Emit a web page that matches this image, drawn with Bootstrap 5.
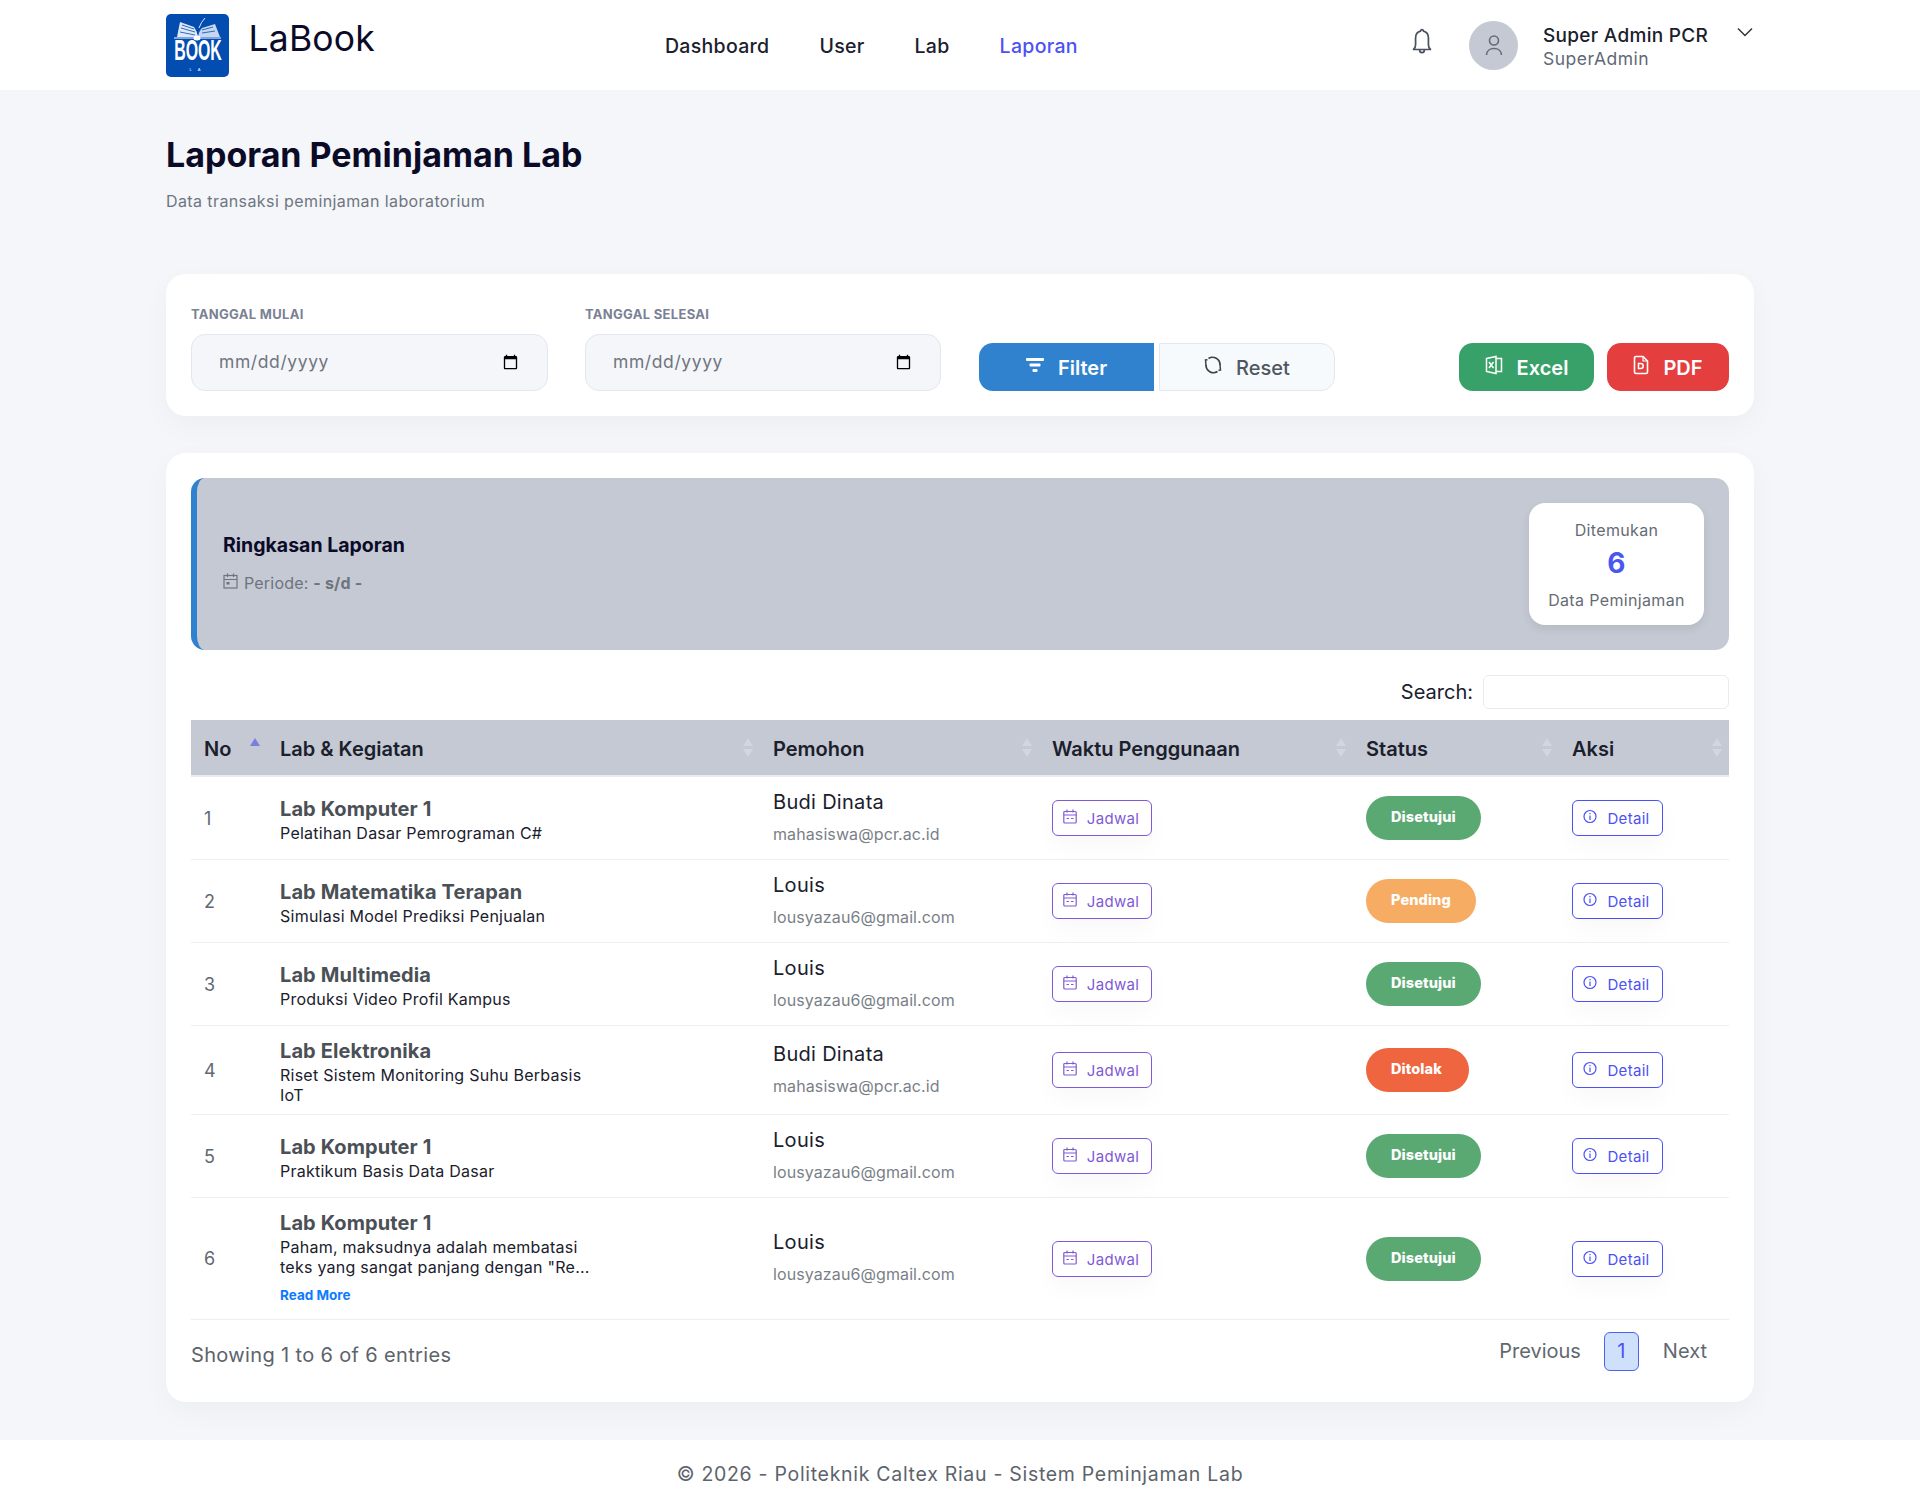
<!DOCTYPE html>
<html lang="id">
<head>
<meta charset="utf-8">
<title>Laporan Peminjaman Lab</title>
<link href="https://cdn.jsdelivr.net/npm/bootstrap@5.3.0/dist/css/bootstrap.min.css" rel="stylesheet">
<style>
html,body{height:1507px}
body{background:#f4f6fa;font-family:Inter,"Liberation Sans",sans-serif;color:#1a202c;font-size:16px}
.wrap-x{width:1588px;margin:0 auto}
.topbar{background:#fff;height:90px;padding:0}
.topbar .wrap-x{display:flex;align-items:center;height:90px}
.logo-box{width:63px;height:63px;display:block}
.brand-txt{font-size:35.500px;color:#0b0b28;margin-left:19.500px;line-height:1;margin-top:-12px;letter-spacing:.2px;padding:0}
.main-nav{margin-left:274px;gap:50px;margin-top:1px}
.main-nav .nav-link{padding:0;color:#1a202c;font-size:19.500px;font-weight:500;line-height:26px;letter-spacing:.3px}
.main-nav .nav-link.active{color:#4c51f5}
.ava{width:49px;height:49px;border-radius:50%;background:#c5c9d3}
.bell-ic{margin-right:34px;margin-top:-6px}
.who{margin-left:25px;width:211px;position:relative;padding-top:5px}
.who-name{font-size:19px;font-weight:500;line-height:23px;color:#1a202c;letter-spacing:.3px}
.who-role{font-size:17.500px;line-height:24px;color:#5f6875;letter-spacing:.5px}
.page-h1{font-size:34px;font-weight:700;color:#0b0b28;line-height:41px;margin:44px 0 0}
.page-sub{font-size:16px;color:#6f7580;line-height:22px;margin:15px 0 0;letter-spacing:.4px}
.soft-card{background:#fff;border:0;border-radius:20px;box-shadow:0 10px 30px rgba(0,0,0,.035)}
.filter-card{margin-top:62px;height:142px;padding:30px 25px 25px;gap:37px}
.f-field{width:357px}
.f-field+.f-field{width:356px}
.f-label{font-size:13px;font-weight:700;color:#7a8194;line-height:20px;margin:0 0 10px;text-transform:uppercase;display:block;letter-spacing:.3px}
.f-input{height:57px;background:#f4f6fa;border:1px solid #e2e8f0;border-radius:14px;padding:0 26px 0 27px;font-size:17.500px;color:#6f7580;letter-spacing:.6px}
.f-input:focus{background:#f4f6fa}
.act-btn{height:48px;display:flex;align-items:center;justify-content:center;gap:14px;font-size:20px;font-weight:600;border:0;padding:2px 0 0;color:#fff}
.act-btn svg{margin-top:-6px}
.b-filter{width:175px;background:#3182ce;border-radius:14px 0 0 14px}
.b-reset{width:176px;background:#f7fafc;border:1px solid #e2e8f0;border-radius:0 14px 14px 0;color:#4f5661;font-weight:500;margin-left:5px}
.b-excel{width:135px;background:#38a169;border-radius:14px}
.b-pdf{width:122px;background:#e53e3e;border-radius:14px;margin-left:13px}
.act-btn:hover,.act-btn:active{color:#fff}
.b-reset:hover{color:#4f5661}
.table-card{margin-top:37px;height:949px;padding:25px}
.sum-box{height:172px;background:#c5c9d3;border-left:6px solid #3182ce;border-radius:14px;padding:25px 25px 25px 26px}
.sum-title{font-size:19.500px;font-weight:700;color:#0b0b28;line-height:26px;margin:-2px 0 0}
.sum-per{font-size:16px;color:#6e747e;line-height:22px;margin:14px 0 0;display:flex;align-items:center;gap:6px;letter-spacing:.2px}
.sum-per svg{margin-top:-4px}
.sum-per b{color:#6e747e;font-weight:700}
.found{width:175px;height:122px;background:#fff;border-radius:16px;box-shadow:0 4px 10px rgba(0,0,0,.08);text-align:center;padding-top:16px;color:#666c75;font-size:16px;line-height:22px;letter-spacing:.35px}
.found-num{font-size:28px;font-weight:700;color:#4a56f0;line-height:34px;margin:5px 0 9px}
.search-row{margin-top:25px;height:34px;gap:10px}
.search-row label{font-size:20px;color:#1a202c;margin:0}
.search-in{width:246px;height:34px;border:1px solid #e8ebf0;border-radius:6px;padding:0 8px}
.data-tbl{margin:11px 0 0;table-layout:fixed;width:1538px;--bs-table-bg:transparent}
.data-tbl th{background:#c5c9d3;height:56px;padding:2px 13px 0;font-size:20px;font-weight:600;color:#1a202c;vertical-align:middle;border-bottom:2px solid #e8eaee;position:relative}
.data-tbl th::before,.data-tbl th::after{content:"";position:absolute;right:7px;border-left:5px solid transparent;border-right:5px solid transparent}
.data-tbl th::before{top:18px;border-bottom:8px solid #d3d6de}
.data-tbl th::after{top:29px;border-top:8px solid #d3d6de}
.data-tbl th.sorted::before{border-bottom-color:#7a7ee0;top:18px;right:7px}
.data-tbl th.sorted::after{display:none}
.data-tbl td{padding:11.500px 13px;vertical-align:middle;border-bottom:1px solid #eceef1;background:transparent}
.data-tbl td.lab-cell{padding-top:13.500px;padding-bottom:9.500px}
.data-tbl .num{font-size:18px;color:#62686f}
.lab-name{font-size:20px;font-weight:700;color:#4a5056;line-height:23px;margin-bottom:2px;letter-spacing:.1px}
.lab-sub{font-size:16px;line-height:20px;color:#1a202c;max-width:320px;letter-spacing:.25px}
.read-more{display:block;font-size:13.500px;font-weight:700;color:#0d7bfd;line-height:36px;height:33px;text-decoration:none}
.p-name{font-size:20px;line-height:26px;color:#1a202c;letter-spacing:.3px}
.p-mail{font-size:16px;line-height:28px;color:#7a7f87;margin-top:5px;letter-spacing:.1px}
.row-btn{display:inline-flex;align-items:center;gap:10px;height:36px;background:#fff;border-radius:6px;font-size:15px;padding:0;justify-content:center;box-shadow:0 10px 24px rgba(0,0,0,.03);letter-spacing:.3px}
.row-btn span{padding-top:3px}
.row-btn svg{margin-top:-3px;margin-left:-2px}
.b-jadwal{width:100px;border:1.5px solid #805ad5;color:#805ad5}
.b-detail{width:91px;border:1.5px solid #4c51f5;color:#4c51f5}
.st-pill{height:44px;display:inline-flex;align-items:center;padding:0 25px 2px;border-radius:22px;font-size:14.500px;font-weight:800;color:#fff;letter-spacing:.1px}
.st-ok{background:#5aa973;min-width:115px}
.st-wait{background:#f6ad63;min-width:109px}
.st-no{background:#ef6540;min-width:103px}
.tbl-foot{height:62px;margin-top:0}
.tbl-info{font-size:20px;color:#5c636b;margin-top:7px;letter-spacing:.35px}
.pg-list{gap:0;margin:0;margin-top:1px}
.pg-list .page-link{border:0;background:transparent;color:#62686f;font-size:20px;padding:0;line-height:39px}
.pg-list .page-item:first-child .page-link{margin-right:24px}
.pg-list .page-item:last-child .page-link{margin-left:24px;margin-right:22px}
.pg-list .page-item.active .page-link{width:35px;height:39px;text-align:center;background:#cfe0fb;border:1px solid #4c62f0;border-radius:6px;color:#4c51f5;line-height:37px}
.foot-bar{background:#fff;height:67px;margin-top:38px;display:flex;align-items:center;justify-content:center;font-size:19.500px;color:#5c636b;padding-top:2px;letter-spacing:.7px}
</style>
</head>
<body>
<nav class="topbar navbar">
  <div class="wrap-x">
    <svg class="logo-box" viewBox="0 0 63 63" role="img" aria-label="LaBook">
      <rect width="63" height="63" rx="5" fill="#034db0"/>
      <path d="M11 23 L14 8 L28 13 Q31 17 32 23 Z" fill="#dfe8f8"/>
      <path d="M54 23 L49 10 L36 14 Q33 17 32 23 Z" fill="#c7d6f2"/>
      <path d="M16 11 L28 15 M15 14 L29 18 M14 18 L29 21 M47 13 L36 16 M49 17 L36 19" stroke="#034db0" stroke-width=".8"/>
      <path d="M33 14 Q35 8 39 4" stroke="#dfe8f8" stroke-width="1" fill="none"/>
      <ellipse cx="31" cy="24" rx="3.500" ry="2.500" fill="#fff"/>
      <path d="M8 24 H55" stroke="#fff" stroke-width="1"/>
      <text transform="translate(32 46) scale(.53 1)" text-anchor="middle" fill="#fff" font-family="'Liberation Sans',sans-serif" font-weight="700" font-size="30">BOOK</text>
      <text x="32" y="57" text-anchor="middle" fill="#fff" font-family="'Liberation Sans',sans-serif" font-size="4" letter-spacing="6">LA</text>
    </svg>
    <a class="navbar-brand brand-txt" href="#">LaBook</a>
    <ul class="nav main-nav">
      <li class="nav-item"><a class="nav-link" href="#">Dashboard</a></li>
      <li class="nav-item"><a class="nav-link" href="#">User</a></li>
      <li class="nav-item"><a class="nav-link" href="#">Lab</a></li>
      <li class="nav-item"><a class="nav-link active" href="#">Laporan</a></li>
    </ul>
    <div class="ms-auto d-flex align-items-center">
      <svg class="bell-ic flex-shrink-0" width="26" height="30" viewBox="0 0 24 28" fill="none" stroke="#4a5160" stroke-width="1.600"><path d="M12 2.500a1.300 1.300 0 0 1 1.300 1.400c3.400.7 4.700 3.300 4.700 6.600v6c0 2 .6 3.300 1.900 4.500H4.100C5.400 19.800 6 18.500 6 16.500v-6c0-3.300 1.300-5.900 4.700-6.600A1.300 1.300 0 0 1 12 2.500Z" stroke-linejoin="round"/><path d="M9.800 21.500a2.200 2.500 0 0 0 4.400 0"/></svg>
      <div class="ava d-flex align-items-center justify-content-center flex-shrink-0">
        <svg width="20" height="22" viewBox="0 0 20 22" fill="none" stroke="#646b78" stroke-width="1.600"><circle cx="10" cy="6.500" r="4.500"/><path d="M2.500 21c0-4 3.300-6.500 7.500-6.500s7.500 2.500 7.500 6.500"/></svg>
      </div>
      <div class="who">
        <div class="who-name">Super Admin PCR</div>
        <div class="who-role">SuperAdmin</div>
        <svg class="position-absolute top-0 end-0" style="margin-top:7px" width="18" height="12" viewBox="0 0 18 12" fill="none" stroke="#2d3440" stroke-width="1.500"><path d="M2 2.500 9 9.500 16 2.500"/></svg>
      </div>
    </div>
  </div>
</nav>

<main class="wrap-x">
  <h1 class="page-h1">Laporan Peminjaman Lab</h1>
  <p class="page-sub">Data transaksi peminjaman laboratorium</p>

  <form class="soft-card filter-card d-flex align-items-end">
    <div class="f-field">
      <label class="f-label" for="d1">Tanggal Mulai</label>
      <input id="d1" type="date" class="form-control f-input">
    </div>
    <div class="f-field">
      <label class="f-label" for="d2">Tanggal Selesai</label>
      <input id="d2" type="date" class="form-control f-input">
    </div>
    <div class="d-flex flex-grow-1" style="margin-left:1px">
      <button type="button" class="btn act-btn b-filter">
        <svg width="18" height="15" viewBox="0 0 18 15" fill="#fff"><rect x="0" y="0" width="18" height="3" rx="1"/><rect x="3.500" y="5.500" width="11" height="3" rx="1"/><rect x="6.500" y="11" width="5" height="3" rx="1"/></svg>
        <span>Filter</span>
      </button>
      <button type="button" class="btn act-btn b-reset">
        <svg width="18" height="20" viewBox="0 0 18 20" fill="none" stroke="#3b424d" stroke-width="1.700"><path d="M4.500 3.500A7.500 7.500 0 0 1 16 10"/><path d="M13.500 16.500A7.500 7.500 0 0 1 2 10"/><path d="M2 10.500 1.500 5 3.500 4.800M16 9.500l.5 5.500-2 .2" stroke-width="1.500"/></svg>
        <span>Reset</span>
      </button>
      <button type="button" class="btn act-btn b-excel ms-auto">
        <svg width="18" height="20" viewBox="0 0 18 20" fill="none" stroke="#fff" stroke-width="1.500"><path d="M1.500 3.500 11 1.500V18.500L1.500 16.500Z"/><path d="M11 3.500h5.500v13H11"/><path d="M4 7l4.500 6M8.500 7 4 13"/></svg>
        <span>Excel</span>
      </button>
      <button type="button" class="btn act-btn b-pdf">
        <svg width="16" height="20" viewBox="0 0 16 20" fill="none" stroke="#fff" stroke-width="1.600"><path d="M1.500 3a1.500 1.500 0 0 1 1.500-1.500h7l4.500 4.500V17a1.500 1.500 0 0 1-1.500 1.500H3A1.500 1.500 0 0 1 1.500 17Z"/><path d="M10 1.500V6h4.500" stroke-width="1.200"/><path d="M5.500 8.500h2.200a2.500 2.500 0 0 1 0 5H5.500Z" stroke-width="1.500"/></svg>
        <span>PDF</span>
      </button>
    </div>
  </form>

  <section class="soft-card table-card">
    <div class="sum-box d-flex align-items-center justify-content-between">
      <div>
        <h2 class="sum-title">Ringkasan Laporan</h2>
        <p class="sum-per">
          <svg width="15" height="16" viewBox="0 0 15 16" fill="none" stroke="#6e747e" stroke-width="1.200"><rect x="1" y="2.500" width="13" height="12.500"/><path d="M1 6.500h13M4.500 .5v3.500M10.500 .5v3.500"/><rect x="3.500" y="9" width="3" height="2.500" fill="#6e747e" stroke="none"/></svg>
          <span>Periode: <b>- s/d -</b></span>
        </p>
      </div>
      <div class="found">
        <div>Ditemukan</div>
        <div class="found-num">6</div>
        <div>Data Peminjaman</div>
      </div>
    </div>

    <div class="search-row d-flex justify-content-end align-items-center">
      <label for="q">Search:</label>
      <input id="q" type="search" class="search-in">
    </div>

    <table class="table data-tbl">
      <colgroup>
        <col style="width:76px"><col style="width:493px"><col style="width:279px"><col style="width:314px"><col style="width:206px"><col style="width:170px">
      </colgroup>
      <thead>
        <tr><th class="sorted">No</th><th>Lab &amp; Kegiatan</th><th>Pemohon</th><th>Waktu Penggunaan</th><th>Status</th><th>Aksi</th></tr>
      </thead>
      <tbody id="rows"></tbody>
    </table>

    <div class="tbl-foot d-flex justify-content-between align-items-center">
      <div class="tbl-info">Showing 1 to 6 of 6 entries</div>
      <ul class="pagination pg-list">
        <li class="page-item"><a class="page-link" href="#">Previous</a></li>
        <li class="page-item active"><a class="page-link" href="#">1</a></li>
        <li class="page-item"><a class="page-link" href="#">Next</a></li>
      </ul>
    </div>
  </section>
</main>
<footer class="foot-bar">© 2026 - Politeknik Caltex Riau - Sistem Peminjaman Lab</footer>

<script>
var cal='<svg width="14" height="15" viewBox="0 0 14 15" fill="none" stroke="currentColor" stroke-width="1.200"><rect x=".8" y="2.500" width="12.400" height="11.500" rx="1"/><path d="M.8 6h12.400M4 .5v3M10 .5v3M3.500 9.500h2.500M8 9.500h2.500"/></svg>';
var inf='<svg width="14" height="15" viewBox="0 0 14 15" fill="none" stroke="currentColor" stroke-width="1.200"><circle cx="7" cy="7.500" r="6"/><path d="M7 6.500v4.500M7 4v1.300"/></svg>';
var data=[
 ['Lab Komputer 1','Pelatihan Dasar Pemrograman C#','Budi Dinata','mahasiswa@pcr.ac.id','Disetujui','st-ok',0],
 ['Lab Matematika Terapan','Simulasi Model Prediksi Penjualan','Louis','lousyazau6@gmail.com','Pending','st-wait',0],
 ['Lab Multimedia','Produksi Video Profil Kampus','Louis','lousyazau6@gmail.com','Disetujui','st-ok',0],
 ['Lab Elektronika','Riset Sistem Monitoring Suhu Berbasis IoT','Budi Dinata','mahasiswa@pcr.ac.id','Ditolak','st-no',0],
 ['Lab Komputer 1','Praktikum Basis Data Dasar','Louis','lousyazau6@gmail.com','Disetujui','st-ok',0],
 ['Lab Komputer 1','Paham, maksudnya adalah membatasi teks yang sangat panjang dengan "Re...','Louis','lousyazau6@gmail.com','Disetujui','st-ok',1]
];
document.getElementById('rows').innerHTML=data.map(function(d,i){
 return '<tr><td class="num">'+(i+1)+'</td><td class="lab-cell"><div class="lab-name">'+d[0]+'</div><div class="lab-sub">'+d[1]+'</div>'+(d[6]?'<a class="read-more" href="#">Read More</a>':'')+'</td>'+
 '<td><div class="p-name">'+d[2]+'</div><div class="p-mail">'+d[3]+'</div></td>'+
 '<td><a class="row-btn b-jadwal text-decoration-none" href="#">'+cal+'<span>Jadwal</span></a></td>'+
 '<td><span class="st-pill '+d[5]+'">'+d[4]+'</span></td>'+
 '<td><a class="row-btn b-detail text-decoration-none" href="#">'+inf+'<span>Detail</span></a></td></tr>';
}).join('');
</script>
<script src="https://cdn.jsdelivr.net/npm/bootstrap@5.3.0/dist/js/bootstrap.bundle.min.js"></script>
</body>
</html>
